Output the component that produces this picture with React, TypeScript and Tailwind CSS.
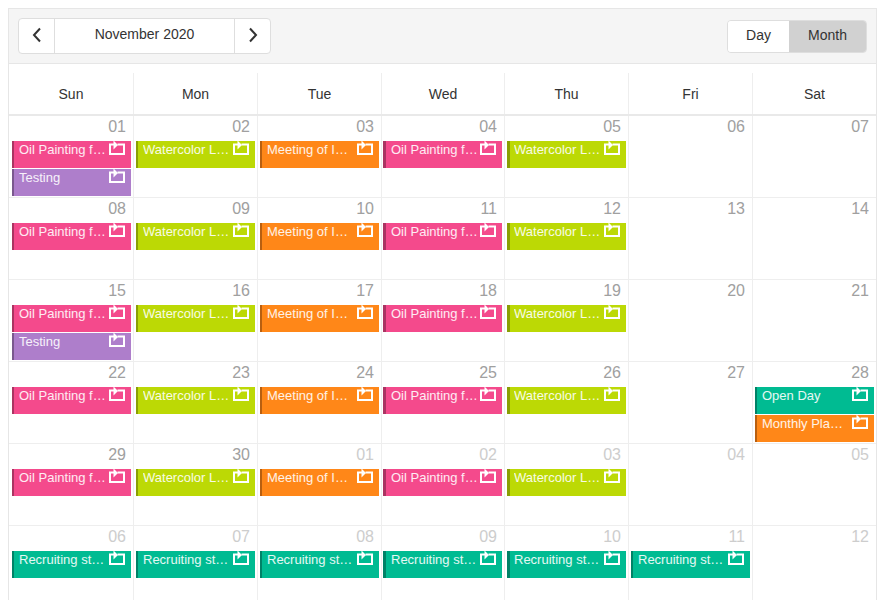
const FONT = "font-['Liberation_Sans',Arial,sans-serif]";

type Kind = 'pink' | 'lime' | 'orange' | 'purple' | 'teal';

const kindClass: Record<Kind, string> = {
  pink: 'bg-[#f44a8c] border-[#aa3462]',
  lime: 'bg-[#bcd905] border-[#8a9f04]',
  orange: 'bg-[#ff8718] border-[#b85f10]',
  purple: 'bg-[#ae7ecb] border-[#7a588e]',
  teal: 'bg-[#00bb92] border-[#008267]',
};

type Ev = { title: string; kind: Kind };
type Day = { label: string; muted?: boolean; events?: Ev[] };

const oil: Ev = { title: 'Oil Painting for Beginners', kind: 'pink' };
const water: Ev = { title: 'Watercolor Landscape', kind: 'lime' };
const meeting: Ev = { title: 'Meeting of Instructors', kind: 'orange' };
const testing: Ev = { title: 'Testing', kind: 'purple' };
const recruiting: Ev = { title: 'Recruiting students', kind: 'teal' };
const openDay: Ev = { title: 'Open Day', kind: 'teal' };
const monthly: Ev = { title: 'Monthly Planning', kind: 'orange' };

const weeks: Day[][] = [
  [
    { label: '01', events: [oil, testing] },
    { label: '02', events: [water] },
    { label: '03', events: [meeting] },
    { label: '04', events: [oil] },
    { label: '05', events: [water] },
    { label: '06' },
    { label: '07' },
  ],
  [
    { label: '08', events: [oil] },
    { label: '09', events: [water] },
    { label: '10', events: [meeting] },
    { label: '11', events: [oil] },
    { label: '12', events: [water] },
    { label: '13' },
    { label: '14' },
  ],
  [
    { label: '15', events: [oil, testing] },
    { label: '16', events: [water] },
    { label: '17', events: [meeting] },
    { label: '18', events: [oil] },
    { label: '19', events: [water] },
    { label: '20' },
    { label: '21' },
  ],
  [
    { label: '22', events: [oil] },
    { label: '23', events: [water] },
    { label: '24', events: [meeting] },
    { label: '25', events: [oil] },
    { label: '26', events: [water] },
    { label: '27' },
    { label: '28', events: [openDay, monthly] },
  ],
  [
    { label: '29', events: [oil] },
    { label: '30', events: [water] },
    { label: '01', muted: true, events: [meeting] },
    { label: '02', muted: true, events: [oil] },
    { label: '03', muted: true, events: [water] },
    { label: '04', muted: true },
    { label: '05', muted: true },
  ],
  [
    { label: '06', muted: true, events: [recruiting] },
    { label: '07', muted: true, events: [recruiting] },
    { label: '08', muted: true, events: [recruiting] },
    { label: '09', muted: true, events: [recruiting] },
    { label: '10', muted: true, events: [recruiting] },
    { label: '11', muted: true, events: [recruiting] },
    { label: '12', muted: true },
  ],
];

const dayNames = ['Sun', 'Mon', 'Tue', 'Wed', 'Thu', 'Fri', 'Sat'];

// columns don't divide evenly in the original, so the sizes are spelled out
const COLS = 'grid-cols-[125px_124px_124px_123px_124px_124px_123px]';
const colPad = ['pl-[3px] pr-[2px]', 'px-[2px]', 'px-[2px]', 'pl-[1px] pr-[2px]', 'px-[2px]', 'px-[2px]', 'px-[2px]'];
const barClass = [
  'border-l-2 pl-[5px]',
  'border-l-2 pl-[5px]',
  'border-l-2 pl-[5px]',
  'border-l-[3px] pl-[5px]',
  'border-l-[3px] pl-[4px]',
  'border-l-2 pl-[5px]',
  'border-l-2 pl-[5px]',
];

function RecurIcon() {
  return (
    <svg width="16" height="15" viewBox="0 0 16 15" className="mt-[-1px] block shrink-0 text-white" fill="none">
      <path d="M5 4.5H1v9.5h14V4.5H8.5" stroke="currentColor" strokeWidth="2" />
      <path d="M4.5 0.5L9 5 4.5 9.5z" fill="currentColor" />
    </svg>
  );
}

function Chevron({ left }: { left?: boolean }) {
  return (
    <svg width="10" height="16" viewBox="0 0 10 16" fill="none" className="mt-[-2px]">
      <path d={left ? 'M8 1.5L2 8l6 6.5' : 'M2 1.5L8 8l-6 6.5'} stroke="#333" strokeWidth="2" />
    </svg>
  );
}

function EventBar({ ev, col }: { ev: Ev; col: number }) {
  return (
    <div className={`flex h-[27px] items-start pr-[6px] ${barClass[col]} ${kindClass[ev.kind]}`}>
      <span className="min-w-0 flex-1 truncate pr-[2px] text-[13px] leading-[18px] text-white/90">{ev.title}</span>
      <RecurIcon />
    </div>
  );
}

export default function App() {
  return (
    <div className={`h-[600px] overflow-hidden bg-white pl-2 pr-2 pt-2 ${FONT}`}>
      <div className="border border-[#e6e6e6]">
        <div className="flex h-[55px] items-center justify-between border-b border-[#e6e6e6] bg-[#f5f5f5] pl-[9px] pr-[9px]">
          <div className="flex h-9 items-stretch rounded border border-[#dedede] bg-white">
            <button className="flex w-9 items-center justify-center border-r border-[#dedede]">
              <Chevron left />
            </button>
            <div className="w-[179px] pt-[6px] text-center text-sm leading-[18px] text-[#333]">November 2020</div>
            <button className="flex w-9 items-center justify-center border-l border-[#dedede]">
              <Chevron />
            </button>
          </div>
          <div className="flex h-[33px] overflow-hidden rounded border border-[#dedede] text-sm text-[#333]">
            <div className="flex w-[61px] items-center justify-center bg-white pb-[2px]">Day</div>
            <div className="flex w-[77px] items-center justify-center bg-[#d1d1d1] pb-[2px]">Month</div>
          </div>
        </div>

        <div className={`grid ${COLS} border-b-2 border-[#e9e9e9] pt-[9px]`}>
          {dayNames.map((d, i) => (
            <div
              key={d}
              className={`flex h-[41px] items-center justify-center text-sm text-[#333] ${i < 6 ? 'border-r border-[#eeeeee]' : ''}`}
            >
              {d}
            </div>
          ))}
        </div>

        {weeks.map((week, w) => (
          <div key={w} className={`grid h-[82px] ${COLS} border-b border-[#eeeeee]`}>
            {week.map((day, i) => (
              <div key={i} className={`${i < 6 ? 'border-r border-[#eeeeee]' : ''}`}>
                <div
                  className={`h-[25px] pr-[7px] text-right text-base leading-[22px] ${day.muted ? 'text-[#cdcdcd]' : 'text-[#a0a0a0]'}`}
                >
                  {day.label}
                </div>
                <div className={`flex flex-col gap-px ${colPad[i]}`}>
                  {day.events?.map((ev, k) => <EventBar key={k} ev={ev} col={i} />)}
                </div>
              </div>
            ))}
          </div>
        ))}
      </div>
    </div>
  );
}
